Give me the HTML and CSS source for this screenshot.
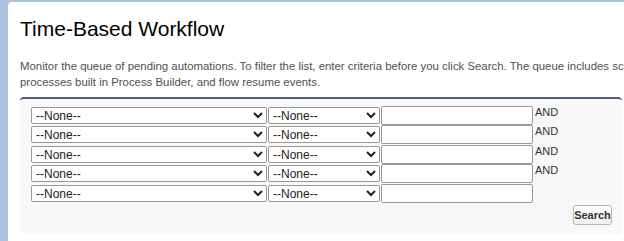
FILE: index.html
```html
<!DOCTYPE html>
<html lang="en">
<head>
    <meta charset="UTF-8">
    <title>Time-Based Workflow</title>
    <link rel="stylesheet" href="styles.css">
</head>
<body>
    <div class="page">
        <div class="panel">
            <h1 class="title">Time-Based Workflow</h1>
            <p class="desc">Monitor the queue of pending automations. To filter the list, enter criteria before you click Search. The queue includes scheduled actions from workflow rules, processes built in Process Builder, and flow resume events.</p>
            <div class="filter_box">
                <div class="filter_rows">
                    <div class="row">
                        <select class="sel_field"><option>--None--</option></select>
                        <select class="sel_op"><option>--None--</option></select>
                        <input type="text" class="inp_val">
                        <span class="and">AND</span>
                    </div>
                    <div class="row">
                        <select class="sel_field"><option>--None--</option></select>
                        <select class="sel_op"><option>--None--</option></select>
                        <input type="text" class="inp_val">
                        <span class="and">AND</span>
                    </div>
                    <div class="row">
                        <select class="sel_field"><option>--None--</option></select>
                        <select class="sel_op"><option>--None--</option></select>
                        <input type="text" class="inp_val">
                        <span class="and">AND</span>
                    </div>
                    <div class="row">
                        <select class="sel_field"><option>--None--</option></select>
                        <select class="sel_op"><option>--None--</option></select>
                        <input type="text" class="inp_val">
                        <span class="and">AND</span>
                    </div>
                    <div class="row">
                        <select class="sel_field"><option>--None--</option></select>
                        <select class="sel_op"><option>--None--</option></select>
                        <input type="text" class="inp_val">
                    </div>
                </div>
                <div class="btn_box">
                    <button type="button" class="btn_search">Search</button>
                </div>
            </div>
        </div>
    </div>
</body>
</html>
```

FILE: styles.css
```css
*{margin:0;padding:0;box-sizing:border-box;}
body{background-color:#adc2de;overflow:hidden;font-family:"Liberation Sans",Arial,sans-serif;}
.page{padding:2px 0 0 8px;height:241px;}
.panel{width:900px;height:100%;padding:15px 0 0 12px;background-color:#fff;border-radius:4px 0 0 0;}
.title{font-size:21px;font-weight:normal;line-height:24px;color:#000;}
.desc{margin-top:17px;width:815px;font-size:11.4px;line-height:16px;color:#505050;}
.filter_box{margin-top:7px;width:602px;padding:7px 10px 9px 11px;background-color:#f8f8f8;border-top:2px solid #4f5d7b;border-radius:4px;}
.filter_rows{display:flex;flex-direction:column;}
.row{display:flex;align-items:flex-start;height:19.4px;}
.row select,.row input{font-family:"Liberation Sans",Arial,sans-serif;font-size:12px;color:#222;background-color:#fff;border:1px solid #999;border-radius:2px;}
.sel_field{width:236px;height:17px;margin-top:1px;}
.sel_op{width:112px;height:17px;margin:1px 0 0 1px;}
.inp_val{width:152px;height:19px;margin-left:1px;border-color:#a8a8a8;border-radius:0;}
.and{margin-left:2px;font-size:11px;line-height:13px;color:#333;}
.btn_box{display:flex;justify-content:flex-end;margin-top:2px;}
.btn_search{width:39px;height:20px;font-family:"Liberation Sans",Arial,sans-serif;font-size:11px;font-weight:bold;color:#333;background:linear-gradient(#fff,#f0f0f0);border:1px solid #b5b5b5;border-radius:3px;}
```
